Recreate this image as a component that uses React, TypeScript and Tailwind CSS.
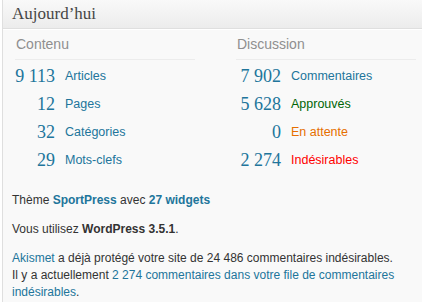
import React from "react";

const serif = { fontFamily: '"Liberation Serif", Georgia, serif' };

type Row = { n: string; label: string; cls: string };

const left: Row[] = [
  { n: "9 113", label: "Articles", cls: "text-[#21759b]" },
  { n: "12", label: "Pages", cls: "text-[#21759b]" },
  { n: "32", label: "Catégories", cls: "text-[#21759b]" },
  { n: "29", label: "Mots-clefs", cls: "text-[#21759b]" },
];
const right: Row[] = [
  { n: "7 902", label: "Commentaires", cls: "text-[#21759b]" },
  { n: "5 628", label: "Approuvés", cls: "text-[#006505]" },
  { n: "0", label: "En attente", cls: "text-[#e66f00]" },
  { n: "2 274", label: "Indésirables", cls: "text-[#ff0000]" },
];

function Col({ title, rows, numW }: { title: string; rows: Row[]; numW: string }) {
  return (
    <div className="flex flex-col">
      <div className="text-[14px] leading-[16px] text-[#8f8f8f] pl-[1px] pt-[7px] pb-[7px] border-b border-[#ececec]">
        {title}
      </div>
      <div className="flex flex-col pt-[2px]">
        {rows.map((r) => (
          <div key={r.label} className="flex items-center h-[28px]">
            <span
              className={`${numW} flex justify-end whitespace-nowrap text-[18px] text-[#21759b] leading-none`}
              style={serif}
            >
              {r.n}
            </span>
            <span className={`ml-[10px] text-[12.5px] leading-none ${r.cls}`}>{r.label}</span>
          </div>
        ))}
      </div>
    </div>
  );
}

export default function App() {
  return (
    <div
      className="w-[422px] h-[302px] bg-white overflow-hidden"
      style={{ fontFamily: '"Liberation Sans", Arial, sans-serif' }}
    >
      <div className="ml-[2px] h-full border-l border-[#dfdfdf] bg-[#f9f9f9] w-[440px]">
        <div className="h-[29px] bg-gradient-to-b from-[#f9f9f9] to-[#ececec] border-b border-[#dfdfdf] shadow-[0_1px_0_#ffffff] pl-[9px] flex items-center">
          <span className="text-[17px] text-[#464646] leading-none pb-[2px]" style={serif}>
            Aujourd’hui
          </span>
        </div>
        <div className="grid grid-cols-[180px_180px] gap-x-[41px] pl-[12px]">
          <Col title="Contenu" rows={left} numW="w-[40px]" />
          <Col title="Discussion" rows={right} numW="w-[45px]" />
        </div>
        <div className="pl-[9px] pt-[18px] text-[12px] text-[#333333] leading-[17px]">
          <p>
            Thème <a className="text-[#21759b] font-bold">SportPress</a> avec{" "}
            <a className="text-[#21759b] font-bold">27 widgets</a>
          </p>
          <p className="mt-[12px]">
            Vous utilisez <span className="font-bold">WordPress 3.5.1</span>.
          </p>
          <p className="mt-[12px] w-[410px]">
            <a className="text-[#21759b]">Akismet</a> a déjà protégé votre site de 24 486 commentaires
            indésirables.
            <br />
            Il y a actuellement{" "}
            <a className="text-[#21759b]">2 274 commentaires dans votre file de commentaires indésirables</a>.
          </p>
        </div>
      </div>
    </div>
  );
}
